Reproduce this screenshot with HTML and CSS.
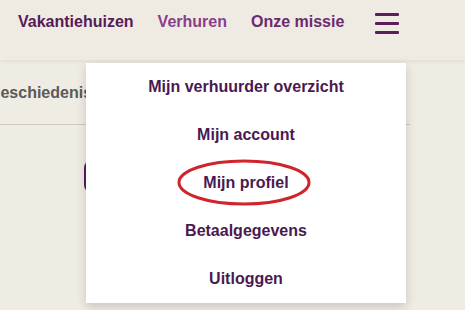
FILE: index.html
```html
<!DOCTYPE html>
<html>
<head>
  <meta charset="utf-8">
  <link rel="stylesheet" href="styles.css">
  <title>Mijn profiel</title>
</head>
<body>
  <div class="header">
    <div class="nav">
      <a class="nav-link nav-main">Vakantiehuizen</a>
      <a class="nav-link nav-active">Verhuren</a>
      <a class="nav-link nav-mission">Onze missie</a>
      <span class="burger"><i></i><i></i><i></i></span>
    </div>

    <div class="menu">
      <a class="menu-item">Mijn verhuurder overzicht</a>
      <a class="menu-item">Mijn account</a>
      <a class="menu-item marked">Mijn profiel
        <svg class="circle" width="136" height="48" viewBox="0 0 136 48">
          <ellipse cx="67" cy="23.5" rx="65" ry="21.5" fill="none" stroke="#d0242c" stroke-width="3"/>
        </svg>
      </a>
      <a class="menu-item">Betaalgegevens</a>
      <a class="menu-item">Uitloggen</a>
    </div>
  </div>

  <div class="content">
    <div class="tabs">
      <span class="tab">Geschiedenis</span>
    </div>
    <div class="action"></div>
  </div>
</body>
</html>
```

FILE: styles.css
```css
html, body {
  height: 100%;
}

body {
  margin: 0;
  min-height: 310px;
  background: #efece3;
  font-family: "Liberation Sans", Arial, Helvetica, sans-serif;
  font-size: 16px;
  overflow-x: hidden;
}

.header {
  position: relative;
  height: 60px;
  background: #efebe2;
  box-shadow: 0 2px 4px rgba(0,0,0,0.06);
  z-index: 2;
}

.nav {
  display: flex;
  align-items: center;
  gap: 24px;
  height: 44px;
  padding-left: 18px;
}

.nav-link {
  font-weight: bold;
  line-height: 20px;
  text-decoration: none;
}

.nav-main { color: #561a58; }
.nav-active { color: #8a3e8d; }
.nav-mission { color: #6b2a6e; }

.burger {
  display: flex;
  flex-direction: column;
  gap: 6px;
  align-self: flex-start;
  margin-top: 13px;
  margin-left: 7px;
}

.burger i {
  display: block;
  width: 24px;
  height: 3px;
  border-radius: 1px;
  background: #5a1e5c;
}

.menu {
  position: absolute;
  top: 63px;
  left: 86px;
  width: 320px;
  background: #fff;
  box-shadow: 0 4px 10px rgba(0,0,0,0.16);
}

.menu-item {
  display: block;
  position: relative;
  height: 48px;
  line-height: 48px;
  text-align: center;
  font-weight: bold;
  color: #4a1951;
  text-decoration: none;
}

.circle {
  position: absolute;
  top: 0;
  left: 91px;
}

.tabs {
  display: flex;
  align-items: center;
  height: 64px;
  width: 422px;
  margin-left: -12px;
  border-bottom: 1px solid #ccc8c0;
}

.tab {
  font-weight: bold;
  color: #5b5a58;
  padding-top: 1px;
}

.action {
  width: 200px;
  height: 33px;
  margin: 35px 0 0 84px;
  border-radius: 8px;
  background: #5a1c5d;
}
```
